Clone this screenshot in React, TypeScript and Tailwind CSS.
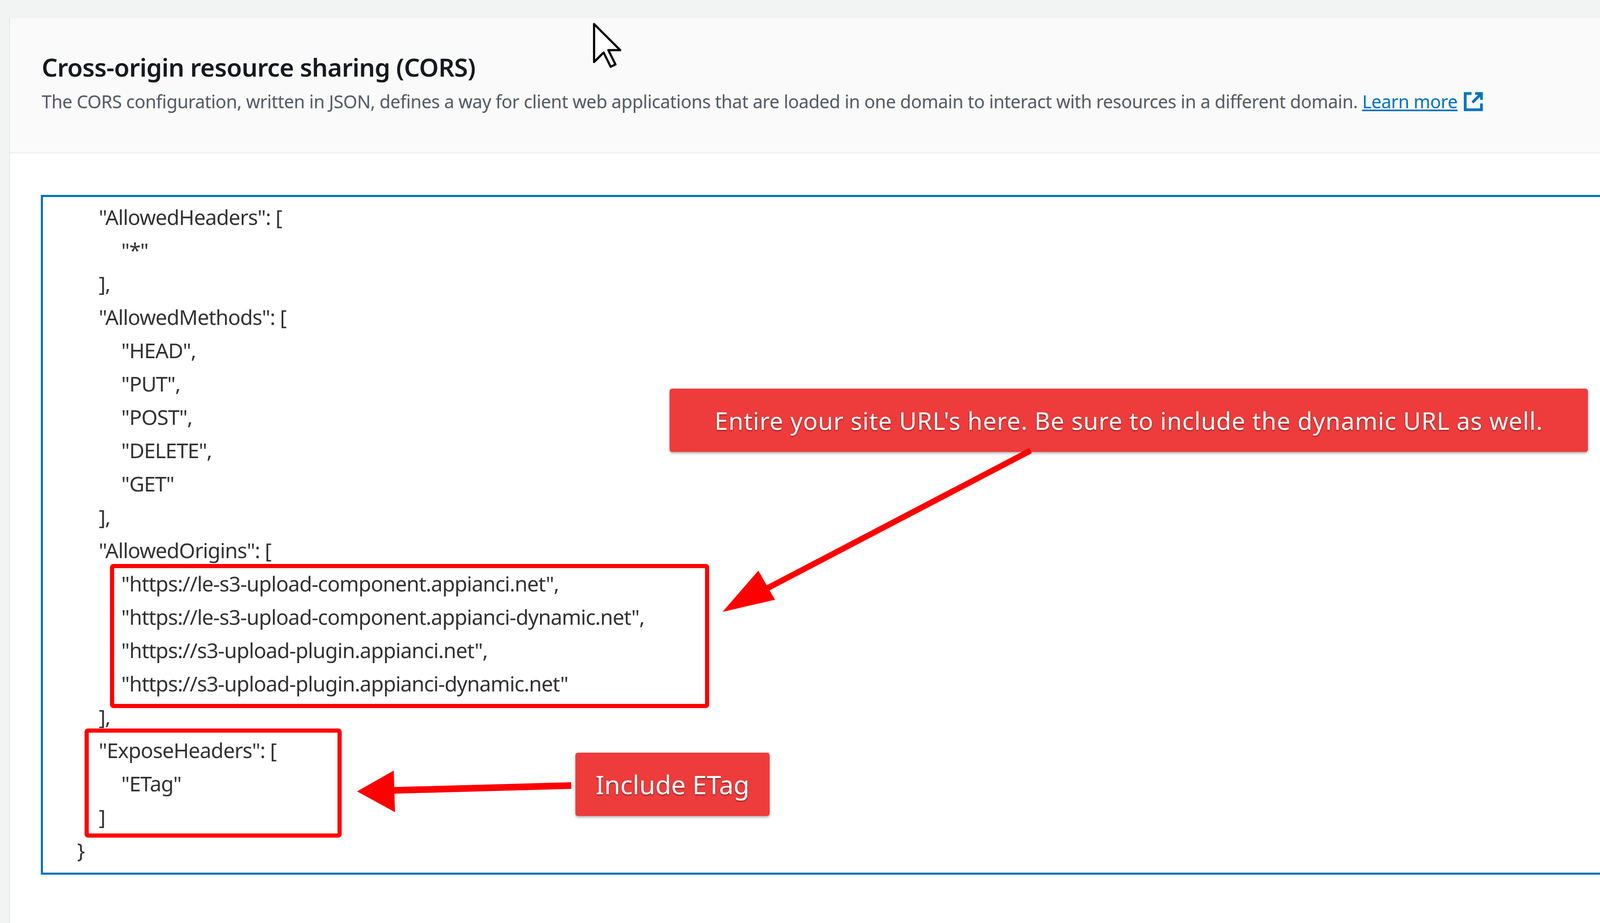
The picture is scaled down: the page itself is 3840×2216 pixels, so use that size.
const codeLines: [number, string][] = [
  [0, '"AllowedHeaders": ['],
  [1, '"*"'],
  [0, '],'],
  [0, '"AllowedMethods": ['],
  [1, '"HEAD",'],
  [1, '"PUT",'],
  [1, '"POST",'],
  [1, '"DELETE",'],
  [1, '"GET"'],
  [0, '],'],
  [0, '"AllowedOrigins": ['],
  [1, '"https://le-s3-upload-component.appianci.net",'],
  [1, '"https://le-s3-upload-component.appianci-dynamic.net",'],
  [1, '"https://s3-upload-plugin.appianci.net",'],
  [1, '"https://s3-upload-plugin.appianci-dynamic.net"'],
  [0, '],'],
  [0, '"ExposeHeaders": ['],
  [1, '"ETag"'],
  [0, ']'],
  [-1, '}'],
]

export default function App() {
  return (
    <div className="relative w-[3840px] h-[2216px] overflow-hidden bg-[#f2f3f3] font-['Open_Sans']">
      <div className="ml-[22px] mt-[44px] h-[2172px] bg-white border-l-2 border-[#e4e6e6]">
        {/* Header */}
        <div className="h-[324px] bg-[#fafafa] border-b-2 border-[#eaeded] pl-[76px] pt-[82px]">
          <h2 className="text-[60px] leading-[70px] font-semibold text-[#16191f] tracking-[-0.8px]">
            Cross-origin resource sharing (CORS)
          </h2>
          <p className="mt-[22px] text-[43px] leading-[52px] text-[#545b64] tracking-[-0.5px] flex items-center">
            The CORS configuration, written in JSON, defines a way for client web applications that are loaded in one domain to interact with resources in a different domain.&nbsp;
            <span className="text-[#0073bb] underline">Learn more</span>
            <svg className="ml-[12px] w-[52px] h-[52px]" viewBox="0 0 24 24" fill="none" stroke="#0073bb" strokeWidth="3">
              <path d="M10 3H3v18h18v-7" />
              <path d="M14 3h7v7M21 3 11 13" />
            </svg>
          </p>
        </div>
        {/* Editor */}
        <div className="ml-[74px] mt-[100px] h-[1632px] border-[5px] border-r-0 border-[#0073bb] pt-[8px] text-[50px] leading-[80px] text-[#333] tracking-[-1.2px]">
          {codeLines.map(([lvl, t], i) => (
            <div
              key={i}
              className={lvl === 1 ? 'pl-[188px]' : lvl === 0 ? 'pl-[134px]' : 'pl-[82px]'}
            >
              {t}
            </div>
          ))}
        </div>
      </div>

      {/* Annotation boxes */}
      <div className="absolute left-[264px] top-[1354px] w-[1438px] h-[346px] border-[10px] border-[#ff0000] rounded-[8px]" />
      <div className="absolute left-[203px] top-[1749px] w-[617px] h-[262px] border-[10px] border-[#ff0000] rounded-[8px]" />

      {/* Callouts */}
      <div className="absolute left-[1607px] top-[933px] w-[2204px] h-[152px] bg-[#ee3b3b] rounded-[6px] shadow-[0_3px_6px_rgba(0,0,0,0.35)] flex items-center justify-center text-white text-[58px] tracking-[1px] font-['Liberation_Sans'] [text-shadow:0_2px_3px_rgba(0,0,0,0.5)]">
        Entire your site URL's here. Be sure to include the dynamic URL as well.
      </div>
      <div className="absolute left-[1381px] top-[1807px] w-[466px] h-[152px] bg-[#ee3b3b] rounded-[6px] shadow-[0_3px_6px_rgba(0,0,0,0.35)] flex items-center justify-center text-white text-[62px] font-['Liberation_Sans'] [text-shadow:0_2px_3px_rgba(0,0,0,0.5)]">
        Include ETag
      </div>

      {/* Arrows */}
      <svg className="absolute left-0 top-0 w-[3840px] h-[2216px] pointer-events-none" viewBox="0 0 3840 2216">
        <line x1="2473" y1="1082" x2="1800" y2="1434" stroke="#ff0000" strokeWidth="14" />
        <polygon points="1734,1469 1820,1370 1860,1440" fill="#ff0000" />
        <line x1="1371" y1="1886" x2="930" y2="1898" stroke="#ff0000" strokeWidth="16" />
        <polygon points="857,1900 945,1850 948,1950" fill="#ff0000" />
      </svg>

      {/* Cursor */}
      <svg className="absolute left-[1420px] top-[52px] w-[80px] h-[114px]" viewBox="0 0 14 20">
        <path d="M1 1v16l4-4 3 6 2-1-3-6h5z" fill="white" stroke="black" strokeWidth="0.9" strokeLinejoin="round" />
      </svg>
    </div>
  )
}
